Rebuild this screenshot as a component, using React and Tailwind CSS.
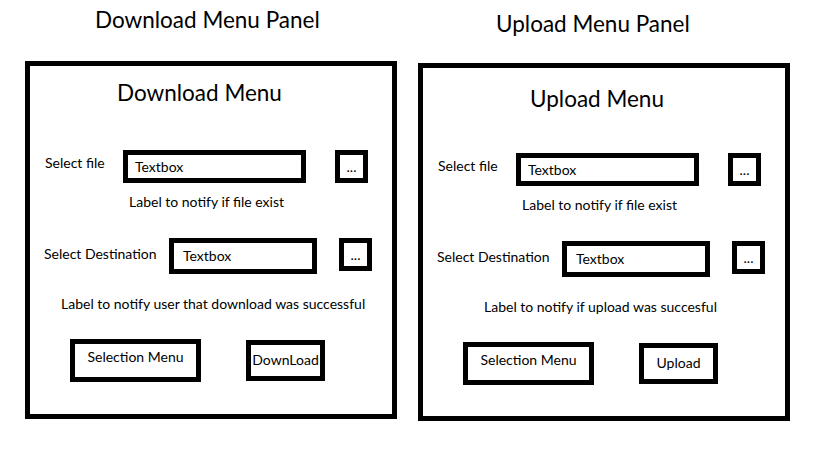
const Box = ({ className, children }) => (
  <div className={`border-[5px] border-black flex items-center ${className}`}>{children}</div>
);

const Panel = ({ title, titleClass, heading, headingClass, rowClass, label2, label2Class, action, colClass }) => (
  <div className={`w-[372px] flex flex-col ${colClass}`}>
    <h1 className={`text-[22.5px] leading-[28px] ${titleClass}`}>{title}</h1>
    <div className="h-[358px] border-[5px] border-black flex flex-col">
      <h2 className={`text-[22.5px] leading-[28px] ${headingClass}`}>{heading}</h2>

      <div className={`flex items-start pl-[15px] ${rowClass}`}>
        <span className="w-[78px] mt-[3px]">Select file</span>
        <Box className="w-[183px] h-[33px] pl-[7px]">Textbox</Box>
        <Box className="ml-[29px] w-[33px] h-[33px] justify-center">...</Box>
      </div>

      <p className="mt-[9px] pl-[99px]">Label to notify if file exist</p>

      <div className="mt-[26px] flex items-start pl-[14px]">
        <span className="w-[125px] mt-[6px]">Select Destination</span>
        <Box className="w-[148px] h-[36px] pl-[9px]">Textbox</Box>
        <Box className="ml-[22px] w-[33px] h-[33px] justify-center">...</Box>
      </div>

      <p className={`mt-[20px] ${label2Class}`}>{label2}</p>

      <div className="mt-[25px] flex items-start pl-[40px]">
        <div className="w-[131px] h-[43px] border-[5px] border-black pt-[3px] text-center">Selection Menu</div>
        <Box className="ml-[45px] mt-[1px] w-[79px] h-[41px] justify-center pb-[1px]">{action}</Box>
      </div>
    </div>
  </div>
);

export default function App() {
  return (
    <div className="w-[819px] h-[460px] bg-white flex text-black text-[14px] leading-[20px] font-['Lato',sans-serif]">
      <Panel
        colClass="ml-[25px]"
        title="Download Menu Panel"
        titleClass="h-[61px] pt-[6px] pl-[70px]"
        heading="Download Menu"
        headingClass="mt-[13px] pl-[87px]"
        rowClass="mt-[43px]"
        label2="Label to notify user that download was successful"
        label2Class="pl-[31px]"
        action="DownLoad"
      />
      <Panel
        colClass="ml-[21px]"
        title="Upload Menu Panel"
        titleClass="h-[63px] pt-[10px] pl-[78px]"
        heading="Upload Menu"
        headingClass="mt-[17px] pl-[107px]"
        rowClass="mt-[40px]"
        label2="Label to notify if upload was succesful"
        label2Class="pl-[61px]"
        action="Upload"
      />
    </div>
  );
}
